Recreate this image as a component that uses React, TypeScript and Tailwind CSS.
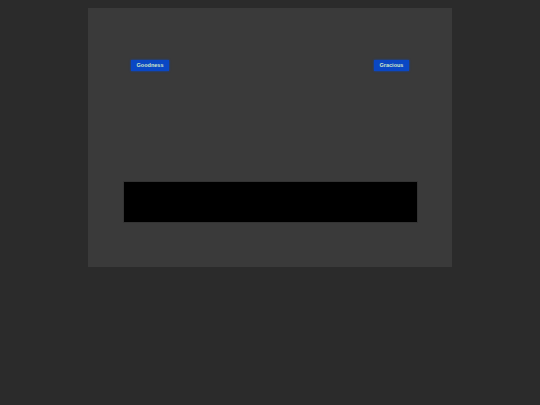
export default function App() {
  return (
    <div className="min-h-[405px] w-full bg-[#2b2b2b] pt-2" style={{ fontFamily: '"Liberation Sans", Arial, sans-serif' }}>
      <div className="mx-auto flex h-[259px] w-[364px] flex-col bg-[#3a3a3a] px-[35px] pt-[52px]">
        <div className="flex items-center justify-between pl-[8px] pr-[8px]">
          <button className="flex h-[11px] w-[38px] items-center justify-center bg-[#0a47c4] text-[5.5px] font-bold text-[#cfe6c8] shadow-[0_0_2px_#0a47c4]">
            Goodness
          </button>
          <button className="flex h-[11px] w-[35px] items-center justify-center bg-[#0a47c4] text-[5.5px] font-bold text-[#cfe6c8] shadow-[0_0_2px_#0a47c4]">
            Gracious
          </button>
        </div>
        <div className="mt-[110px] h-[42px] w-[295px] border border-[#333] bg-black"></div>
      </div>
    </div>
  );
}
